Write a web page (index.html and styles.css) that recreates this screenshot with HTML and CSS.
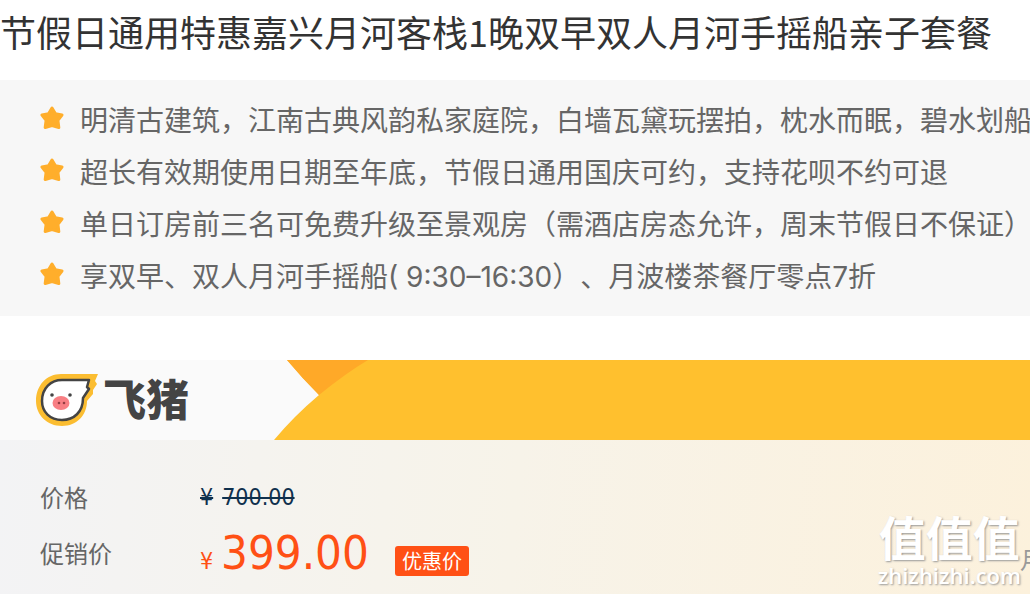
FILE: index.html
```
<!DOCTYPE html>
<html lang="zh-CN">
<head>
<meta charset="UTF-8">
<meta name="viewport" content="width=device-width, initial-scale=1.0">
<title>嘉兴月河客栈</title>
<link rel="stylesheet" href="styles.css">
</head>
<body>
<h1 class="title">节假日通用特惠嘉兴月河客栈1晚双早双人月河手摇船亲子套餐</h1>

<svg class="defs" aria-hidden="true">
  <symbol id="star" viewBox="0 0 24 24">
    <path d="M12 2 L15.3 7.6 L22 9 L17.9 14.3 L18.8 21.5 L12 19.6 L5.2 21.5 L6.1 14.3 L2 9 L8.7 7.6 Z" fill="#ffae2b" stroke="#ffae2b" stroke-width="3" stroke-linejoin="round"/>
  </symbol>
</svg>

<ul class="features">
  <li><svg class="star"><use href="#star"/></svg>明清古建筑，江南古典风韵私家庭院，白墙瓦黛玩摆拍，枕水而眠，碧水划船</li>
  <li><svg class="star"><use href="#star"/></svg>超长有效期使用日期至年底，节假日通用国庆可约，支持花呗不约可退</li>
  <li><svg class="star"><use href="#star"/></svg>单日订房前三名可免费升级至景观房（需酒店房态允许，周末节假日不保证）</li>
  <li><svg class="star"><use href="#star"/></svg>享双早、双人月河手摇船( 9:30–16:30）、月波楼茶餐厅零点7折</li>
</ul>

<div class="banner">
  <svg class="logo" viewBox="0 0 160 60" role="img" aria-label="飞猪">
    <!-- pig head -->
    <path d="M25 4 H62 L59 11 L61 14 L57 20 L57 24 L51 31 C51 45 41 56 26 56 C11 56 0 45 0 31 C0 15 11 4 25 4 Z" fill="#fbbd31"/>
    <path d="M26 10 H53 L51 17 L53 19 L47 28 C47 42 38 50 26 50 C14 50 6 42 6 31 C6 18 15 10 26 10 Z" fill="#fff" stroke="#444" stroke-width="2.5" stroke-linejoin="round"/>
    <circle cx="16" cy="25" r="1.8" fill="#444"/>
    <circle cx="34" cy="25" r="1.8" fill="#444"/>
    <ellipse cx="25" cy="33" rx="8.5" ry="7" fill="#f87f84"/>
    <circle cx="23" cy="33" r="1.3" fill="#943e43"/>
    <circle cx="28" cy="33" r="1.3" fill="#943e43"/>
    <text class="logo-text" x="67" y="46">飞猪</text>
  </svg>
  <svg class="ribbon" viewBox="0 0 100 80" aria-hidden="true">
    <path d="M13 0 H100 V80 H0 Q20 56 45 35 Q28 18 13 0 Z" fill="#ffc02e"/>
    <path d="M13 0 H94 Q72 13 45 35 Q28 18 13 0 Z" fill="#ffa928"/>
  </svg>
  <div class="banner-fill"></div>
</div>

<div class="prices">
  <div class="price-row">
    <span class="label">价格</span>
    <span class="old-price"><del>¥</del><del>700.00</del></span>
  </div>
  <div class="price-row">
    <span class="label">促销价</span>
    <span class="new-price"><span class="yen">¥</span><span class="amount">399.00</span></span>
    <span class="badge">优惠价</span>
  </div>
  <div class="cut">月</div>
  <div class="watermark">
    <span class="mark-name">值值值</span>
    <span class="mark-site">zhizhizhi.com</span>
  </div>
</div>
</body>
</html>
```
FILE: styles.css
```
body {
  margin: 0;
  background-color: #ffffff;
  color: #333333;
  font-family: "Noto Sans CJK SC", sans-serif;
  text-spacing-trim: space-all;
  overflow: hidden;
}
.title {
  margin: 0;
  padding: 5px 0 23px;
  font-size: 36px;
  line-height: 52px;
  font-weight: normal;
  white-space: nowrap;
}
.defs {
  display: none;
}
.features {
  margin: 0 0 44px;
  padding: 15px 0 13px 40px;
  list-style: none;
  background-color: #f7f7f7;
  color: #666666;
  font-family: Inter, "Noto Sans CJK SC", sans-serif;
  font-size: 28px;
  line-height: 52px;
  overflow: hidden;
}
.features li {
  display: flex;
  align-items: center;
  height: 52px;
  white-space: nowrap;
}
.star {
  width: 24px;
  height: 24px;
  margin: 0 16px 6px 0;
  flex-shrink: 0;
}
.banner {
  display: flex;
  height: 80px;
  background-color: #fafafa;
}
.logo {
  width: 160px;
  height: 60px;
  margin: 10px 78px 10px 36px;
  flex-shrink: 0;
}
.logo-text {
  font-size: 43px;
  font-weight: 900;
  fill: #444444;
}
.ribbon {
  width: 100px;
  height: 80px;
  flex-shrink: 0;
}
.banner-fill {
  flex-grow: 1;
  background-color: #ffc02e;
}
.prices {
  position: relative;
  padding: 29px 0 13px 40px;
  background: linear-gradient(95deg, #f3f3f5, #f7f3e9 50%, #fcf1dc);
}
.price-row {
  display: flex;
  align-items: baseline;
  height: 56px;
  line-height: 56px;
}
.label {
  align-self: center;
  width: 160px;
  color: #666666;
  font-size: 24px;
}
.old-price {
  display: flex;
  gap: 9px;
  color: #0f304d;
  font-family: "DejaVu Sans Condensed", "DejaVu Sans", sans-serif;
  font-size: 23px;
}
.new-price {
  display: flex;
  align-items: baseline;
  color: #ff5015;
  font-family: "DejaVu Sans Condensed", "DejaVu Sans", sans-serif;
}
.yen {
  width: 21px;
  font-size: 23px;
}
.amount {
  font-size: 47px;
}
.badge {
  margin-left: 26px;
  padding: 0 7px;
  border-radius: 3px;
  background-color: #ff5015;
  color: #ffffff;
  font-size: 20px;
  line-height: 30px;
}
.cut {
  position: absolute;
  right: -14px;
  bottom: 20px;
  color: #999999;
  font-size: 24px;
  line-height: 30px;
}
.watermark {
  position: absolute;
  right: 9px;
  bottom: 6px;
  display: flex;
  flex-direction: column;
  align-items: center;
  color: #ffffff;
  text-shadow: 1px 1px 2px #999999;
}
.mark-name {
  font-size: 47px;
  line-height: 52px;
  font-weight: bold;
}
.mark-site {
  font-family: "Open Sans", sans-serif;
  font-size: 22px;
  line-height: 26px;
  font-weight: 600;
}
```
